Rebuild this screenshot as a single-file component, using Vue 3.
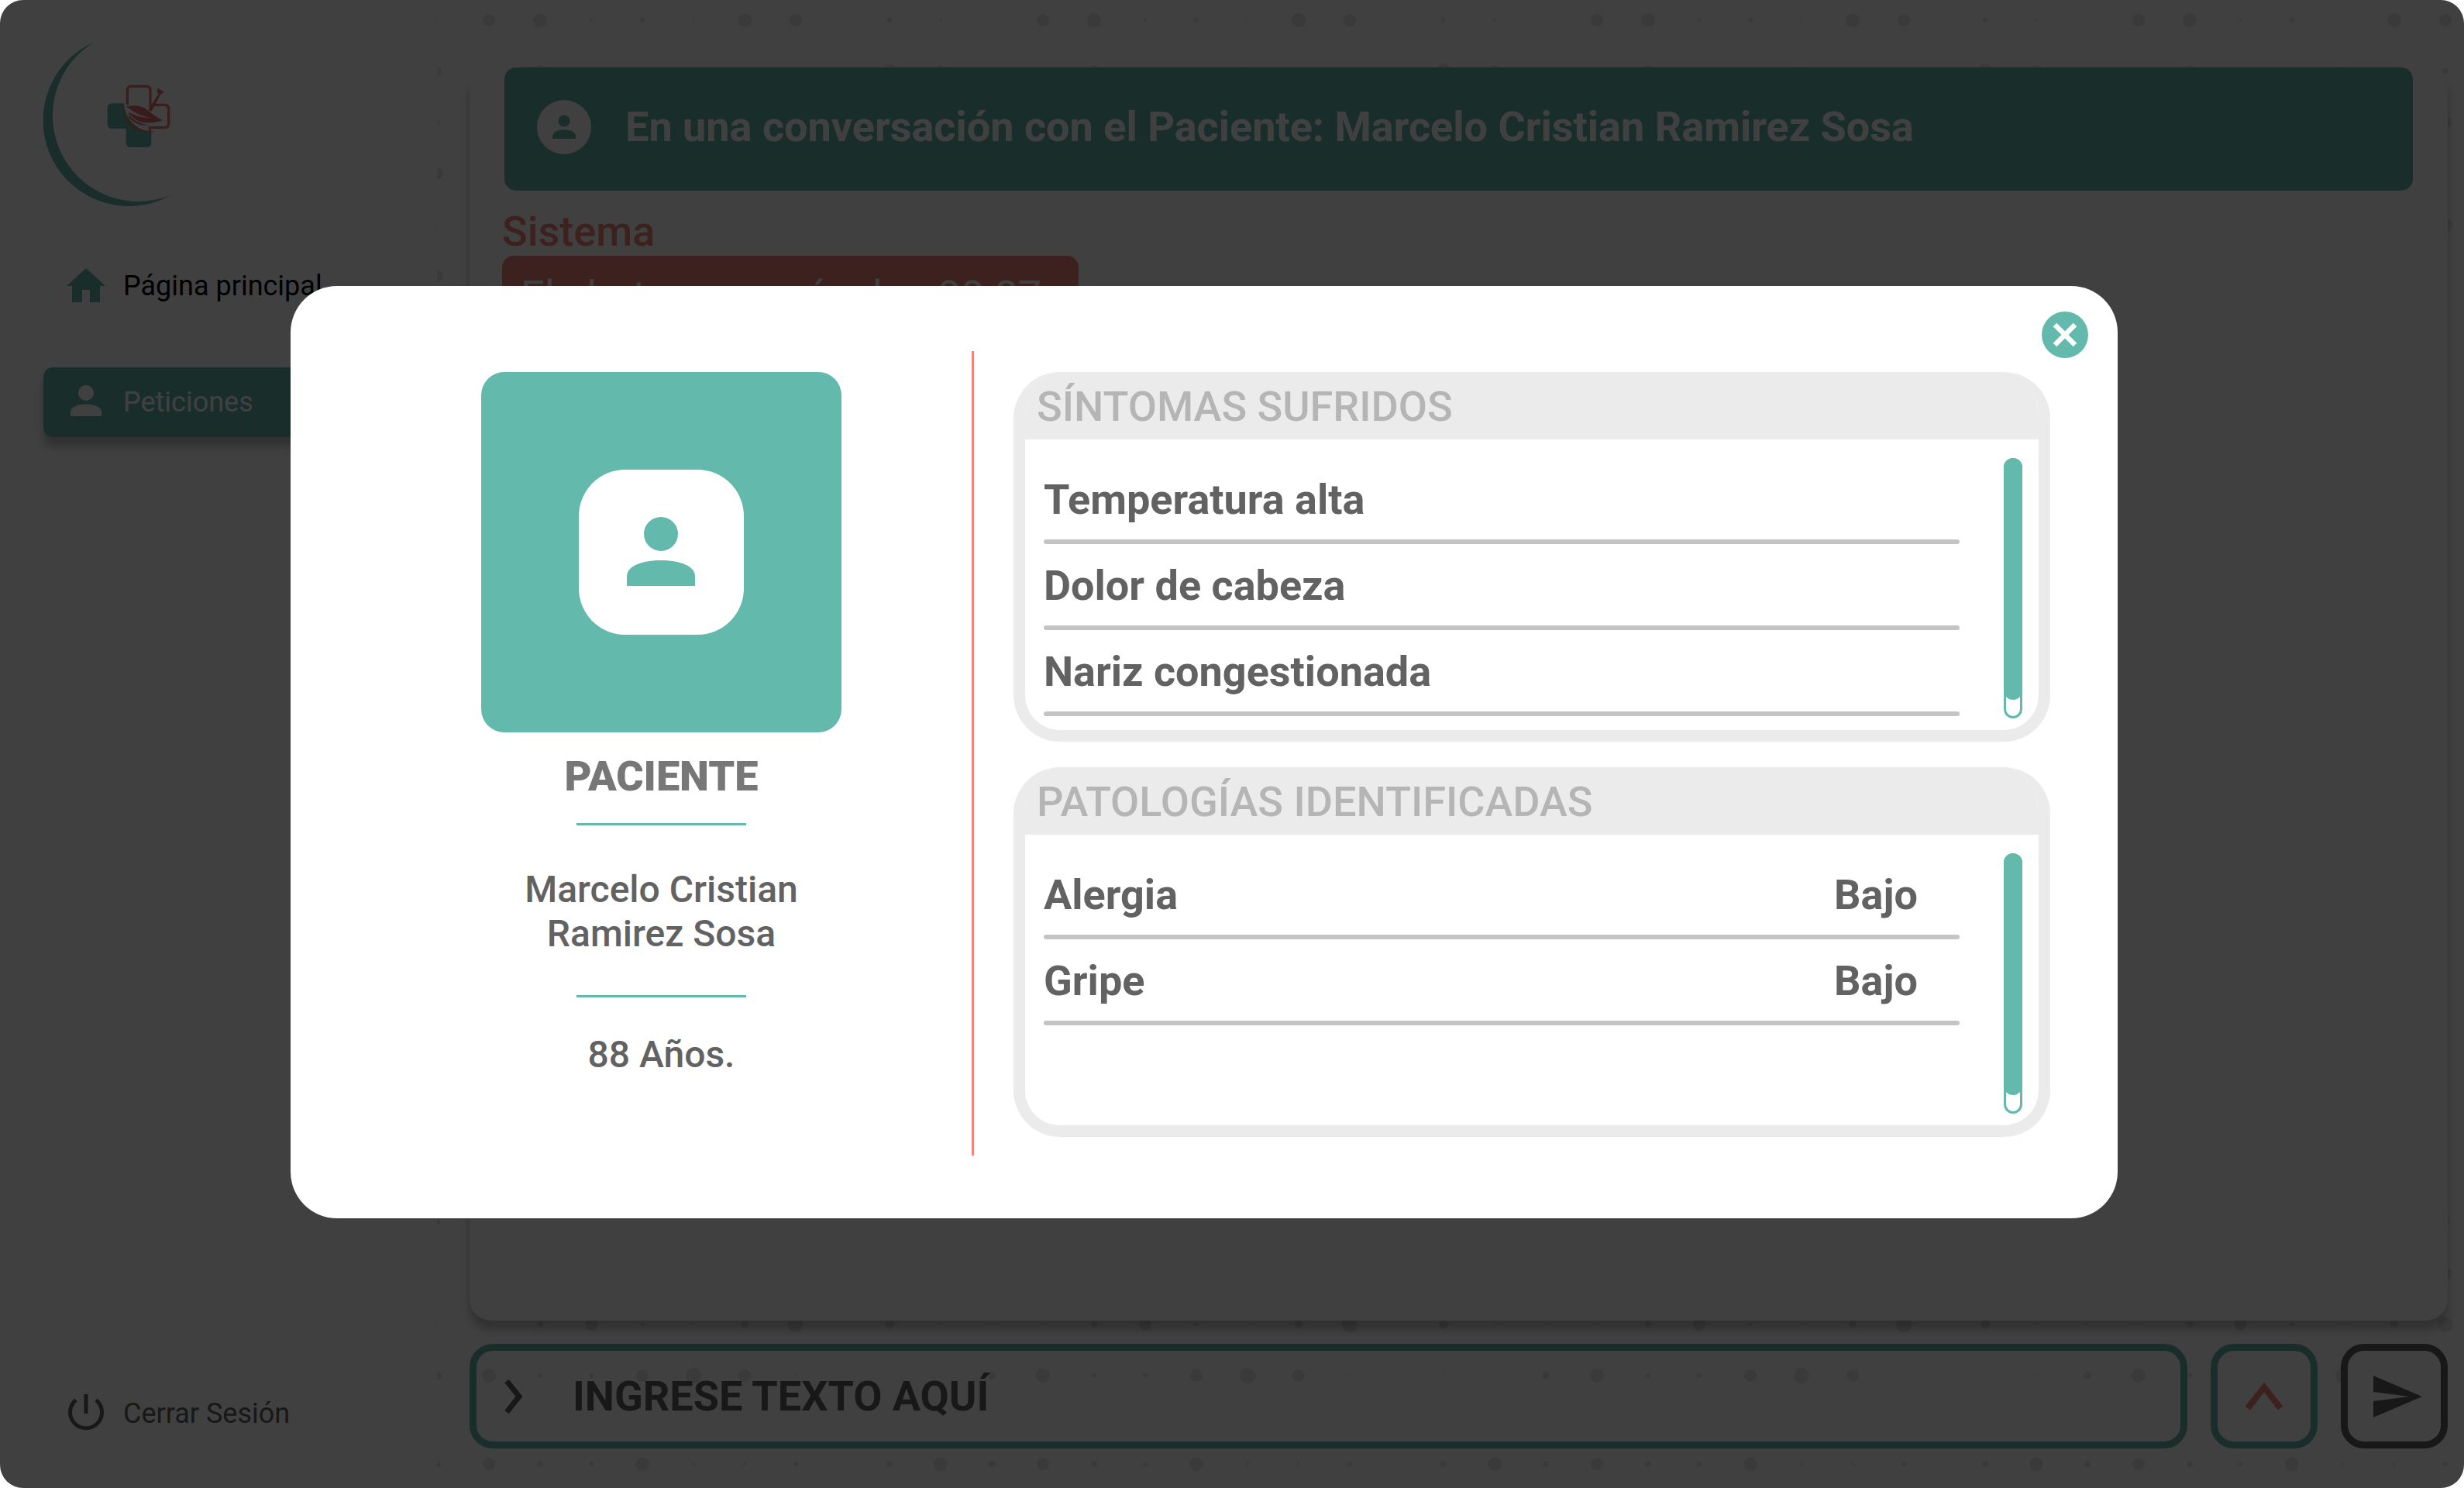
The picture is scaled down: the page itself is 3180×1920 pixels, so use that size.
<script setup>
import { ref } from 'vue'

const message = ref('')
const symptoms = ['Temperatura alta', 'Dolor de cabeza', 'Nariz congestionada']
const pathologies = [
  { name: 'Alergia', level: 'Bajo' },
  { name: 'Gripe', level: 'Bajo' },
]

// Halftone backdrop: each row lists the radii of one repeating ten-dot tile.
const tileStarts = [-282, 584, 1299, 1998]
const topRows = [
  { y: 26, radii: [3, 2, 1, 8, 9, 2, 3, 1, 9, 8] },
  { y: 92, radii: [10, 8, 5, 4, 8, 4, 4, 6, 3, 4] },
  { y: 158, radii: [3, 6, 3, 4, 8, 2, 3, 1, 4, 8] },
  { y: 224, radii: [4, 2, 7, 4, 8, 4, 4, 6, 3, 2] },
  { y: 290, radii: [3, 6, 1, 4, 8, 2, 3, 1, 4, 9] },
  { y: 356, radii: [3, 6, 7, 4, 8, 2, 3, 1, 4, 3] },
]
const bottomRows = [
  { y: 20, radii: [3, 2, 3, 8, 9, 2, 3, 1, 9, 5] },
  { y: 86, radii: [3, 2, 1, 8, 9, 2, 3, 1, 9, 8] },
  { y: 152, radii: [6, 1, 1, 1, 4, 8, 2, 1, 5, 10] },
  { y: 218, radii: [1, 1, 5, 9, 3, 3, 8, 10, 8, 1] },
  { y: 332, radii: [4, 9, 4, 8, 4, 3, 9, 2, 2, 3] },
]
const buildDots = (rows) =>
  rows.flatMap((row) =>
    tileStarts.flatMap((start, tile) =>
      row.radii.map((r, i) => ({
        key: `${row.y}-${tile}-${i}`,
        cx: start + (tile === 0 ? 151 : 0) + i * 66,
        cy: row.y,
        r,
      })),
    ),
  )
const topDots = buildDots(topRows)
const bottomDots = buildDots(bottomRows)
</script>

<template>
  <div class="app">
    <aside class="sidebar">
      <svg class="logo" viewBox="0 0 170 220" role="img" aria-label="Logo">
        <path class="teal" d="M66 4A110.600 110.600 0 1 0 164 202A110.800 110.800 0 0 1 66 4Z" />
        <g transform="translate(54 30) scale(.3333)">
          <path class="teal" d="M104 160H150Q156 222 206 254Q230 268 256 270V312Q256 330 238 330H176Q158 330 158 312V258H104Q86 258 86 240V178Q86 160 104 160Z" />
          <path class="logo-line" d="M163 166V110Q163 94 179 94H236Q252 94 252 110V178M264 166H308Q323 166 323 182V238Q323 254 308 254H250V268" />
          <path class="logo-fill" d="M146 158Q142 208 178 242Q206 266 270 269Q214 280 176 250Q136 214 146 158Z" />
          <path class="logo-fill" d="M158 172Q216 160 246 190Q270 212 300 226Q262 240 224 234Q184 226 166 192Q196 214 250 216Q200 206 158 172Z" />
          <path class="logo-fill" d="M166 196Q180 232 250 246Q196 248 170 216Z" />
          <path class="logo-fill" d="M244 186L284 122L278 116L280 102L304 114L302 120L292 126L256 192Z" />
        </g>
      </svg>
      <nav class="nav">
        <a class="nav-item" href="#inicio">
          <svg class="nav-icon teal" viewBox="0 0 50 50"><path d="M25 4L50 27H43V48H30V32H20V48H7V27H0Z" /></svg>
          Página principal
        </a>
        <a class="nav-item active" href="#peticiones">
          <svg class="nav-icon" viewBox="0 0 50 50"><circle cx="25" cy="15" r="10" /><path d="M5 45V40C5 33 15 29.500 25 29.500S45 33 45 40V45Z" /></svg>
          Peticiones
        </a>
      </nav>
      <a class="nav-item logout" href="#salir">
        <svg class="nav-icon" viewBox="0 0 50 50" fill="none" stroke="currentColor" stroke-width="5"><path d="M25 2V27M12 9.500A20.500 20.500 0 1 0 38 9.500" /></svg>
        Cerrar Sesión
      </a>
    </aside>

    <main class="main">
      <svg class="dots dots-top" aria-hidden="true">
        <circle v-for="d in topDots" :key="d.key" :cx="d.cx" :cy="d.cy" :r="d.r" />
      </svg>
      <svg class="dots dots-bottom" aria-hidden="true">
        <circle v-for="d in bottomDots" :key="d.key" :cx="d.cx" :cy="d.cy" :r="d.r" />
      </svg>
      <section class="chat">
        <header class="chat-header">
          <svg class="chat-avatar" viewBox="0 0 70 70">
            <circle cx="35" cy="35" r="35" fill="#fff" />
            <circle class="teal" cx="35" cy="27" r="7.500" />
            <path class="teal" d="M20 50V47C20 41 27 38.500 35 38.500S50 41 50 47V50Z" />
          </svg>
          <h1>En una conversación con el Paciente: Marcelo Cristian Ramirez Sosa</h1>
        </header>
        <p class="sender">Sistema</p>
        <p class="bubble">El chat comenzó a las 00:07</p>
      </section>
      <form class="composer" @submit.prevent>
        <label class="field">
          <svg class="field-icon" viewBox="0 0 24 46" fill="none" stroke="currentColor" stroke-width="7"><path d="M3 3L19 23L3 43" /></svg>
          <input v-model="message" type="text" placeholder="INGRESE TEXTO AQUÍ" aria-label="Mensaje" />
        </label>
        <button class="square up" type="button" aria-label="Desplegar">
          <svg viewBox="0 0 48 36" width="48" height="36" fill="none" stroke="currentColor" stroke-width="8"><path d="M3 33L24 6L45 33" /></svg>
        </button>
        <button class="square send" type="submit" aria-label="Enviar">
          <svg viewBox="0 0 63 54" width="63" height="54"><path d="M0 0L63 27L0 54V33L46 27L0 21Z" fill="currentColor" /></svg>
        </button>
      </form>
    </main>

    <div class="overlay">
      <section class="modal" role="dialog" aria-modal="true" aria-label="Datos del paciente">
        <button class="close" type="button" aria-label="Cerrar">
          <svg viewBox="0 0 60 60" width="60" height="60"><path d="M17 17L43 43M43 17L17 43" stroke="#fff" stroke-width="6.500" /></svg>
        </button>
        <div class="profile">
          <div class="photo">
            <div class="photo-inner">
              <svg viewBox="0 0 90 90" width="90" height="90"><g class="teal"><circle cx="44" cy="23" r="22" /><path d="M0 90V78C0 63 22 57 44 57S88 63 88 78V90Z" /></g></svg>
            </div>
          </div>
          <h2>PACIENTE</h2>
          <hr />
          <p class="name">Marcelo Cristian<br />Ramirez Sosa</p>
          <hr />
          <p class="age">88 Años.</p>
        </div>
        <div class="divider"></div>
        <div class="panels">
          <section class="panel">
            <h3>SÍNTOMAS SUFRIDOS</h3>
            <div class="panel-body">
              <ul>
                <li v-for="s in symptoms" :key="s"><span>{{ s }}</span></li>
              </ul>
              <div class="track"><div class="thumb"></div></div>
            </div>
          </section>
          <section class="panel">
            <h3>PATOLOGÍAS IDENTIFICADAS</h3>
            <div class="panel-body">
              <ul>
                <li v-for="p in pathologies" :key="p.name"><span>{{ p.name }}</span><span>{{ p.level }}</span></li>
              </ul>
              <div class="track"><div class="thumb"></div></div>
            </div>
          </section>
        </div>
      </section>
    </div>
  </div>
</template>

<style>
body {
  background: #fff;
}
</style>

<style scoped>
.app {
  --teal: #63b9ac;
  --coral: #f4837b;
  --ink: #626262;
  position: relative;
  display: grid;
  grid-template-columns: 564px 1fr;
  min-height: 100vh;
  font-family: Roboto, sans-serif;
  color: var(--ink);
}
.app *,
.app *::before,
.app *::after {
  box-sizing: border-box;
}
h1, h2, h3, p, ul {
  margin: 0;
  padding: 0;
}
h1, h2, h3, .sender, .bubble, li, .field input {
  font-size: 54px;
  line-height: 63px;
}
.teal {
  fill: var(--teal);
}

/* Sidebar */
.sidebar {
  display: flex;
  flex-direction: column;
  padding: 50px 36px 51px 56px;
}
.logo {
  width: 170px;
  height: 220px;
}
.logo-line {
  fill: none;
  stroke: #e87676;
  stroke-width: 10;
}
.logo-fill {
  fill: #e86e6e;
}
.nav {
  display: flex;
  flex-direction: column;
  gap: 60px;
  margin-top: 54px;
}
.nav-item {
  display: flex;
  align-items: center;
  gap: 23px;
  height: 90px;
  padding-left: 30px;
  border-radius: 12px;
  font-size: 36px;
  line-height: 42px;
  color: #000;
  text-decoration: none;
}
.nav-item.active {
  background: var(--teal);
  color: #fff;
  box-shadow: 0 12px 12px rgba(0, 0, 0, 0.25);
}
.nav-icon {
  width: 50px;
  height: 50px;
  margin-bottom: 4px;
}
.nav-item.active .nav-icon {
  fill: #fff;
}
.logout {
  margin-top: auto;
  color: var(--ink);
}

/* Conversation */
.main {
  position: relative;
  display: flex;
  flex-direction: column;
  gap: 30px;
  padding: 87px 21px 51px 42px;
}
.dots {
  position: absolute;
  left: 0;
  width: 100%;
  height: 372px;
  fill: #e6e6e6;
}
.dots-top {
  top: 0;
}
.dots-bottom {
  bottom: 0;
  height: 363px;
}
.chat {
  position: relative;
  flex: 1;
  padding: 0 45px 0 42px;
  background: #fff;
  border-radius: 28px;
  box-shadow: 0 12px 12px rgba(0, 0, 0, 0.25);
}
.chat-header {
  display: flex;
  align-items: center;
  gap: 44px;
  height: 159px;
  margin-left: 3px;
  padding: 0 42px 6px;
  border-radius: 15px;
  background: var(--teal);
  color: #fff;
}
.chat-avatar {
  width: 70px;
  height: 70px;
}
.sender {
  margin-top: 21px;
  font-weight: 500;
  color: var(--coral);
}
.bubble {
  width: fit-content;
  height: 90px;
  padding: 20px 48px 0 24px;
  border-radius: 15px;
  background: var(--coral);
  color: #fff;
}
.composer {
  position: relative;
  display: flex;
  gap: 30px;
  height: 135px;
}
.field {
  display: flex;
  flex: 1;
  align-items: center;
  gap: 64px;
  padding-left: 36px;
  border: 9px solid var(--teal);
  border-radius: 30px;
}
.field-icon {
  width: 24px;
  height: 46px;
}
.field input {
  flex: 1;
  height: 100%;
  padding: 0;
  border: 0;
  outline: 0;
  background: none;
  font-family: inherit;
  font-weight: 700;
  color: var(--ink);
}
.field input::placeholder {
  color: var(--ink);
  opacity: 1;
}
.square {
  display: flex;
  align-items: center;
  justify-content: center;
  width: 138px;
  padding: 0;
  border: 9px solid;
  border-radius: 30px;
  background: #fff;
}
.up {
  border-color: var(--teal);
  color: var(--coral);
}
.send {
  padding-left: 9px;
  border-color: var(--ink);
  color: var(--ink);
}

/* Patient dialog */
.overlay {
  position: absolute;
  inset: 0;
  padding: 369px 447px 0 375px;
  border-radius: 30px;
  background: rgba(0, 0, 0, 0.75);
}
.modal {
  position: relative;
  display: grid;
  grid-template-columns: 879fr 3px 1476fr;
  padding: 84px 0 81px;
  border-radius: 60px;
  background: #fff;
}
.close {
  position: absolute;
  top: 33px;
  right: 38px;
  width: 60px;
  height: 60px;
  padding: 0;
  border: 0;
  border-radius: 50%;
  background: var(--teal);
}
.close svg {
  display: block;
}
.profile {
  display: flex;
  flex-direction: column;
  align-items: center;
  padding: 27px 0 0 78px;
  text-align: center;
}
.photo {
  display: grid;
  place-items: center;
  width: 465px;
  height: 465px;
  border-radius: 30px;
  background: var(--teal);
}
.photo-inner {
  display: grid;
  place-items: center;
  width: 213px;
  height: 213px;
  padding-bottom: 4px;
  border-radius: 60px;
  background: #fff;
}
.profile h2 {
  margin-top: 25px;
  font-weight: 900;
  color: #777;
}
.profile hr {
  width: 219px;
  height: 3px;
  margin: 29px 0 0;
  border: 0;
  background: var(--teal);
}
.name,
.age {
  font-size: 48px;
  font-weight: 500;
  line-height: 57px;
}
.name {
  margin: 54px 0 22px;
}
.age {
  margin-top: 45px;
}
.divider {
  background: var(--coral);
}
.panels {
  display: flex;
  flex-direction: column;
  gap: 33px;
  padding: 27px 87px 24px 51px;
}
.panel {
  border: 15px solid #ebebeb;
  border-top: 0;
  border-radius: 60px;
  background: #fff;
  overflow: hidden;
}
.panel h3 {
  padding: 13px 0 11px 15px;
  background: #ebebeb;
  font-weight: 500;
  color: #b5b5b5;
}
.panel-body {
  display: flex;
  justify-content: space-between;
  min-height: 375px;
  padding: 24px 21px 15px 24px;
}
ul {
  flex: 1;
  margin-right: 57px;
  list-style: none;
}
li {
  display: flex;
  flex-wrap: wrap;
  justify-content: space-between;
  padding-top: 22px;
  font-weight: 700;
}
li span:nth-child(2) {
  margin-right: 54px;
}
li::after {
  content: '';
  flex-basis: 100%;
  height: 6px;
  margin-top: 20px;
  border-radius: 3px;
  background: #c4c4c4;
}
.track {
  width: 24px;
  border: 3px solid var(--teal);
  border-radius: 12px;
}
.thumb {
  width: 24px;
  height: 312px;
  margin: -3px 0 0 -3px;
  border-radius: 12px;
  background: var(--teal);
}
</style>
